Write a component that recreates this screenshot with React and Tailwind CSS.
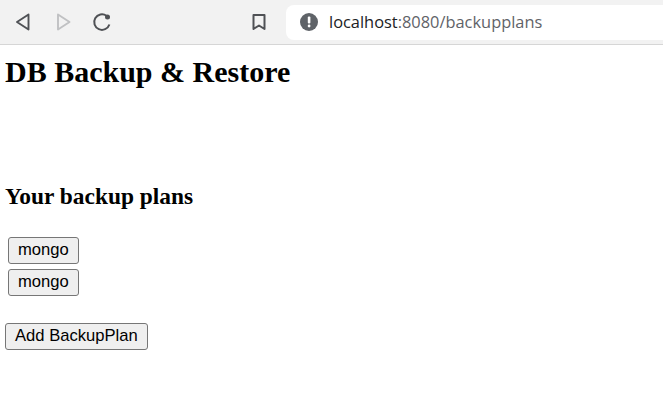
import React from "react";

const Btn = ({ children, className = "" }) => (
  <button className={`h-[27px] px-[9px] bg-[#efefef] border border-[#767676] rounded-[3px] text-[16.6px] leading-none text-black font-['Liberation_Sans',Arial,sans-serif] ${className}`}>
    {children}
  </button>
);

export default function App() {
  return (
    <div className="w-[663px] h-[410px] bg-white overflow-hidden font-['Liberation_Serif','Times_New_Roman',serif] text-black">
      <div className="h-[45px] bg-[#f2f2f2] border-b border-[#d6d6d6] flex items-center">
        <svg className="ml-[14px]" width="18" height="20" viewBox="0 0 18 20" fill="none" stroke="#4f5155" strokeWidth="1.9" strokeLinejoin="round">
          <path d="M14.5 2.5 L3 10 L14.5 17.5 Z" />
        </svg>
        <svg className="ml-[22px]" width="18" height="20" viewBox="0 0 18 20" fill="none" stroke="#c0c1c3" strokeWidth="1.9" strokeLinejoin="round">
          <path d="M4 2.5 L15.5 10 L4 17.5 Z" />
        </svg>
        <svg className="ml-[20px]" width="20" height="20" viewBox="0 0 20 20" fill="none" stroke="#4f5155" strokeWidth="2">
          <path d="M17.4 12.5 A7.8 7.8 0 1 1 14.5 3.7" />
          <circle cx="15.5" cy="5" r="2.5" fill="#4f5155" stroke="none" />
        </svg>
        <svg className="ml-[139px]" width="16" height="20" viewBox="0 0 16 20" fill="none" stroke="#4f5155" strokeWidth="2" strokeLinejoin="round">
          <path d="M2.5 3 H13.5 V17 L8 13.5 L2.5 17 Z" />
        </svg>
        <div className="ml-[19px] h-[35px] flex-1 bg-white rounded-l-[8px] flex items-center pl-[13px]">
          <svg width="20" height="20" viewBox="0 0 20 20">
            <circle cx="10" cy="10" r="9" fill="#5f6368" />
            <rect x="8.8" y="4.6" width="2.6" height="6.8" rx="1" fill="white" />
            <circle cx="10.1" cy="14" r="1.4" fill="white" />
          </svg>
          <span className="ml-[10px] text-[16.4px] leading-none font-['Open_Sans',sans-serif] text-[#5f6368]">
            <span className="text-[#202124]">localhost</span>:8080/backupplans
          </span>
        </div>
      </div>
      <div className="pl-[5px]">
        <h1 className="mt-[8px] text-[30px] leading-[37px] font-bold">DB Backup &amp; Restore</h1>
        <h3 className="mt-[93px] text-[23.4px] leading-[27px] font-bold">Your backup plans</h3>
        <div className="mt-[27px] pl-[3px] flex flex-col items-start gap-[5px]">
          <Btn>mongo</Btn>
          <Btn>mongo</Btn>
        </div>
        <Btn className="mt-[27px] block">Add BackupPlan</Btn>
      </div>
    </div>
  );
}
